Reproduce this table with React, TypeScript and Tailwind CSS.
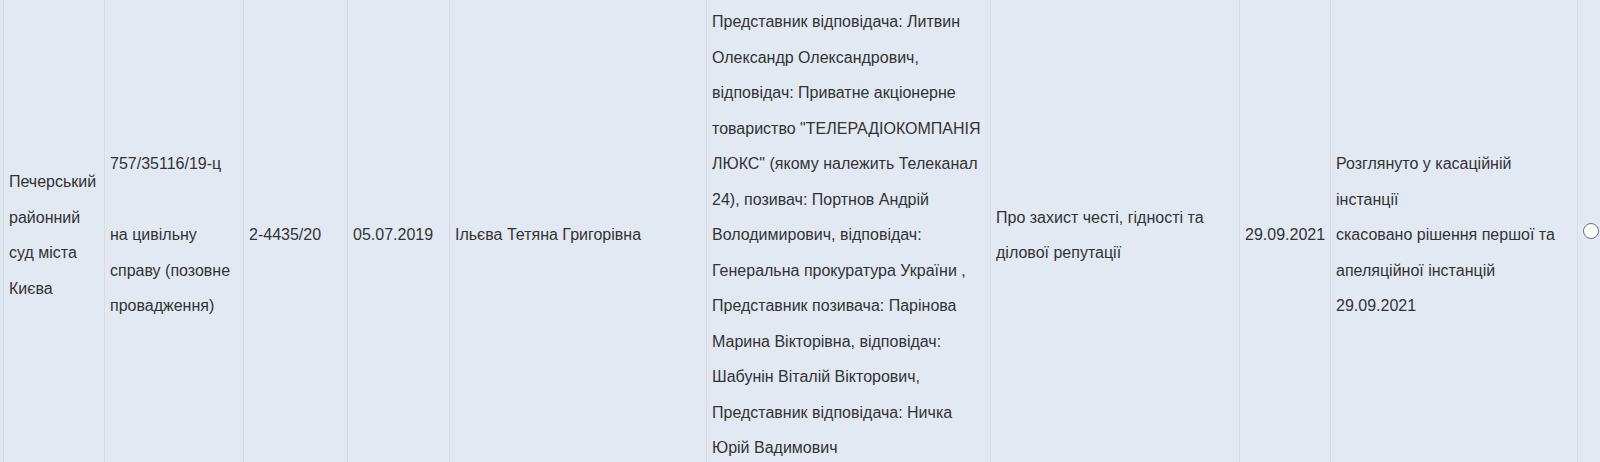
const cell = "flex items-center border-l border-[#d5dce4] px-[5px] py-1";

export default function App() {
  return (
    <div className="h-[462px] overflow-hidden bg-[#e2e9f3] pl-[3px] font-['Liberation_Sans',Arial,sans-serif] text-[16px] leading-[35.5px] text-[#333]">
      <div className="grid h-[470px] grid-cols-[101px_139px_104px_102px_257px_284px_249px_91px_247px_1fr]">
        <div className={cell}>
          <div>Печерський районний суд міста Києва</div>
        </div>
        <div className={cell}>
          <div>
            757/35116/19-ц
            <br />
            <br />
            на цивільну справу (позовне провадження)
          </div>
        </div>
        <div className={cell}>
          <div>2-4435/20</div>
        </div>
        <div className={cell}>
          <div>05.07.2019</div>
        </div>
        <div className={cell}>
          <div>Ільєва Тетяна Григорівна</div>
        </div>
        <div className={cell}>
          <div>
            Представник відповідача: Литвин Олександр Олександрович, відповідач: Приватне
            акціонерне товариство "ТЕЛЕРАДІОКОМПАНІЯ ЛЮКС" (якому належить Телеканал 24),
            позивач: Портнов Андрій Володимирович, відповідач: Генеральна прокуратура України ,
            Представник позивача: Парінова Марина Вікторівна, відповідач: Шабунін Віталій
            Вікторович, Представник відповідача: Ничка Юрій Вадимович
          </div>
        </div>
        <div className={cell}>
          <div>Про захист честі, гідності та ділової репутації</div>
        </div>
        <div className={cell}>
          <div className="whitespace-nowrap">29.09.2021</div>
        </div>
        <div className={cell}>
          <div>
            Розглянуто у касаційній інстанції
            <br />
            скасовано рішення першої та апеляційної інстанцій
            <br />
            29.09.2021
          </div>
        </div>
        <div className="flex items-center border-l border-[#d5dce4] pb-2 pl-[5px]">
          <span className="block h-4 w-4 shrink-0 rounded-full border-[1.5px] border-[#6e6e6e] bg-white" />
        </div>
      </div>
    </div>
  );
}
